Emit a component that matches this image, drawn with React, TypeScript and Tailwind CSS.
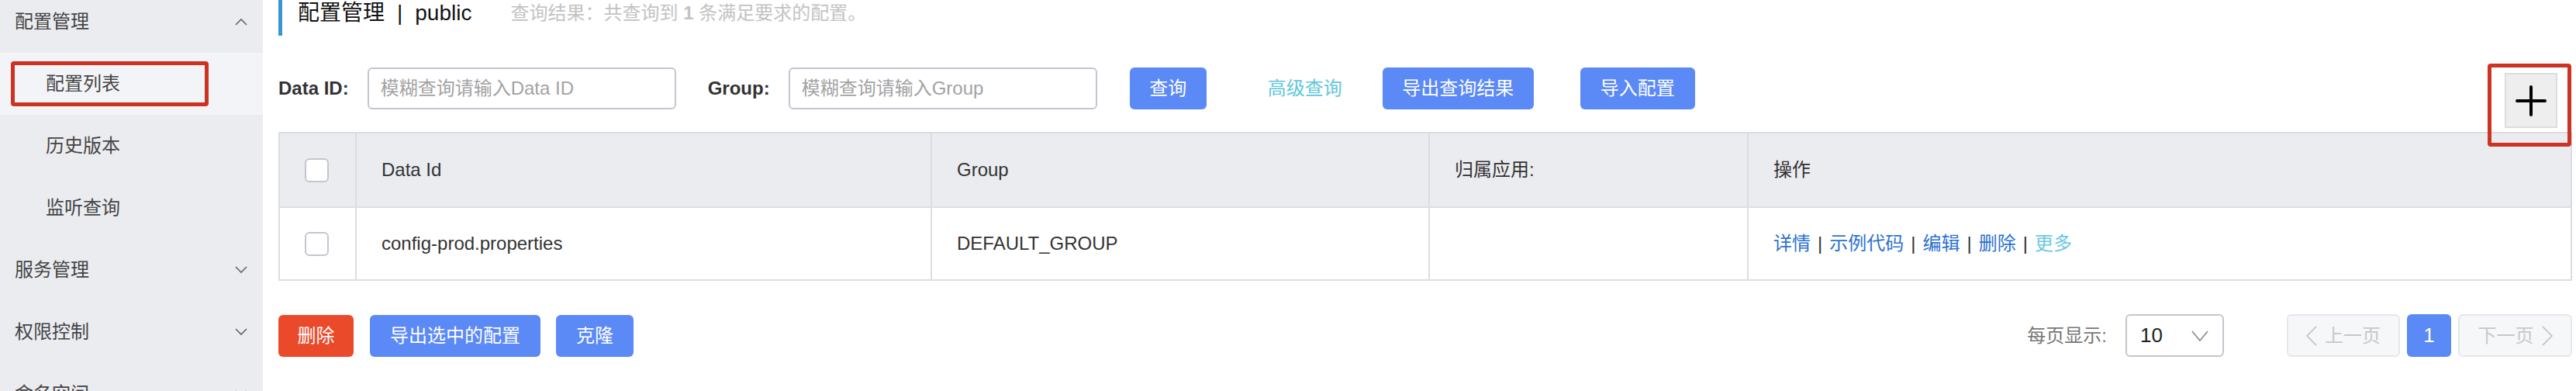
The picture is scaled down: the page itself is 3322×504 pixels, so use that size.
import { ReactNode } from "react";

const font = { fontFamily: '"Liberation Sans", "Noto Sans CJK SC", sans-serif' };

function Chevron({ up }: { up?: boolean }) {
  return (
    <svg width="16" height="10" viewBox="0 0 16 10" className="text-[#666]">
      <path d={up ? "M1 9 L8 2 L15 9" : "M1 1 L8 8 L15 1"} fill="none" stroke="currentColor" strokeWidth="1.6" />
    </svg>
  );
}

function NavItem({ label, sub, active, open, boxed }: { label: string; sub?: boolean; active?: boolean; open?: boolean; boxed?: boolean }) {
  return (
    <div className={"relative flex h-[80px] items-center pr-[20px] " + (sub ? "pl-[59px] " : "pl-[19px] ") + (active ? "bg-[#f3f4f8]" : "")}>
      <span className="text-[24px] text-[#444]">{label}</span>
      {!sub && (
        <span className="ml-auto">
          <Chevron up={open} />
        </span>
      )}
      {boxed && <div className="absolute left-[14px] top-[11px] h-[58px] w-[255px] rounded-[4px] border-[5px] border-[#cc3322]" />}
    </div>
  );
}

function Btn({ children, w, red }: { children: ReactNode; w: string; red?: boolean }) {
  return (
    <div className={"flex h-[54px] items-center justify-center rounded-[6px] text-[24px] text-white " + w + (red ? " bg-[#eb4a2a]" : " bg-[#5b89f6]")}>
      {children}
    </div>
  );
}

function Checkbox() {
  return <div className="h-[31px] w-[31px] rounded-[6px] border-2 border-[#c4c6cf] bg-white" />;
}

function Sidebar() {
  return (
    <div className="w-[339px] shrink-0 bg-[#ebecf0]">
      <div className="mt-[-12px]">
        <NavItem label="配置管理" open />
        <NavItem label="配置列表" sub active boxed />
        <NavItem label="历史版本" sub />
        <NavItem label="监听查询" sub />
        <NavItem label="服务管理" />
        <NavItem label="权限控制" />
        <NavItem label="命名空间" />
      </div>
    </div>
  );
}

function Filters() {
  return (
    <div className="mt-[41px] flex items-start">
      <div className="flex h-[54px] items-center">
        <span className="text-[24px] font-bold text-[#333]">Data ID:</span>
        <div className="ml-[24px] flex h-[54px] w-[398px] items-center rounded-[6px] border-2 border-[#c4c6cf] pl-[15px] text-[24px] text-[#a3a3a3]">
          模糊查询请输入Data ID
        </div>
        <span className="ml-[41px] text-[24px] font-bold text-[#333]">Group:</span>
        <div className="ml-[24px] flex h-[54px] w-[398px] items-center rounded-[6px] border-2 border-[#c4c6cf] pl-[15px] text-[24px] text-[#a3a3a3]">
          模糊查询请输入Group
        </div>
        <div className="ml-[42px]">
          <Btn w="w-[99px]">查询</Btn>
        </div>
        <span className="ml-[79px] text-[24px] text-[#5fc7dc]">高级查询</span>
        <div className="ml-[52px]">
          <Btn w="w-[195px]">导出查询结果</Btn>
        </div>
        <div className="ml-[60px]">
          <Btn w="w-[148px]">导入配置</Btn>
        </div>
      </div>
      <div className="relative ml-auto mr-[19px] mt-[7px] flex h-[71px] w-[68px] items-center justify-center border-2 border-[#dddddd] bg-[#eeeeee]">
        <svg width="40" height="40" viewBox="0 0 40 40">
          <path d="M20 2 V38 M2 20 H38" stroke="#000" strokeWidth="4" strokeLinecap="round" />
        </svg>
        <div className="absolute left-[-24px] top-[-14px] h-[107px] w-[108px] rounded-[4px] border-[5px] border-[#cc3322]" />
      </div>
    </div>
  );
}

function Sep() {
  return <span className="mx-[9px] text-[#333]">|</span>;
}

function Table() {
  const cell = "flex items-center border-l-2 border-[#dcdde2] pl-[32px] text-[24px] text-[#333]";
  return (
    <div className="mt-[5px] border-2 border-[#dcdde2]">
      <div className="grid h-[94px] grid-cols-[97px_742px_642px_411px_1fr] bg-[#ebecf0]">
        <div className="flex items-center pl-[32px]">
          <Checkbox />
        </div>
        <div className={cell}>Data Id</div>
        <div className={cell}>Group</div>
        <div className={cell}>归属应用:</div>
        <div className={cell}>操作</div>
      </div>
      <div className="grid h-[94px] grid-cols-[97px_742px_642px_411px_1fr] border-t-2 border-[#dcdde2] bg-white">
        <div className="flex items-center pl-[32px]">
          <Checkbox />
        </div>
        <div className={cell}>config-prod.properties</div>
        <div className={cell}>DEFAULT_GROUP</div>
        <div className={cell}></div>
        <div className={cell}>
          <span className="text-[#2c72cf]">详情</span>
          <Sep />
          <span className="text-[#2c72cf]">示例代码</span>
          <Sep />
          <span className="text-[#2c72cf]">编辑</span>
          <Sep />
          <span className="text-[#2c72cf]">删除</span>
          <Sep />
          <span className="text-[#6cc9e0]">更多</span>
        </div>
      </div>
    </div>
  );
}

function Footer() {
  return (
    <div className="mt-[43px] flex items-center">
      <Btn w="w-[97px]" red>
        删除
      </Btn>
      <div className="ml-[21px]">
        <Btn w="w-[220px]">导出选中的配置</Btn>
      </div>
      <div className="ml-[20px]">
        <Btn w="w-[100px]">克隆</Btn>
      </div>
      <div className="ml-auto flex items-center">
        <span className="text-[24px] text-[#777]">每页显示:</span>
        <div className="ml-[24px] flex h-[55px] w-[127px] items-center rounded-[6px] border-2 border-[#c4c6cf] pl-[17px] pr-[18px] text-[26px] text-[#222]">
          10
          <svg className="ml-auto" width="22" height="14" viewBox="0 0 22 14">
            <path d="M1 1 L11 13 L21 1" fill="none" stroke="#888" strokeWidth="1.6" />
          </svg>
        </div>
        <div className="ml-[81px] flex h-[55px] w-[146px] items-center justify-center gap-[10px] rounded-[6px] border-2 border-[#e6e7eb] bg-[#f6f7f9] text-[24px] text-[#c8c8c8]">
          <svg width="14" height="26" viewBox="0 0 14 26">
            <path d="M13 1 L1 13 L13 25" fill="none" stroke="#c8c8c8" strokeWidth="1.8" />
          </svg>
          上一页
        </div>
        <div className="ml-[9px] flex h-[55px] w-[57px] items-center justify-center rounded-[6px] bg-[#5b89f6] text-[26px] text-white">1</div>
        <div className="ml-[9px] flex h-[55px] w-[147px] items-center justify-center gap-[10px] rounded-[6px] border-2 border-[#e6e7eb] bg-[#f6f7f9] text-[24px] text-[#c8c8c8]">
          下一页
          <svg width="14" height="26" viewBox="0 0 14 26">
            <path d="M1 1 L13 13 L1 25" fill="none" stroke="#c8c8c8" strokeWidth="1.8" />
          </svg>
        </div>
      </div>
    </div>
  );
}

export default function App() {
  return (
    <div className="flex h-[504px] w-[3322px] overflow-hidden bg-white" style={font}>
      <Sidebar />
      <div className="flex-1 pl-[20px] pr-[5px]">
        <div className="mt-[-12px] flex h-[58px] items-center border-l-[5px] border-[#3b95d3] pl-[20px]">
          <span className="text-[28px] text-[#111]">配置管理</span>
          <span className="mx-[16px] text-[28px] text-[#111]">|</span>
          <span className="text-[28px] text-[#111]">public</span>
          <span className="ml-[50px] text-[24px] text-[#c3c3c3]">
            查询结果：共查询到 <b>1</b> 条满足要求的配置。
          </span>
        </div>
        <Filters />
        <Table />
        <Footer />
      </div>
    </div>
  );
}
